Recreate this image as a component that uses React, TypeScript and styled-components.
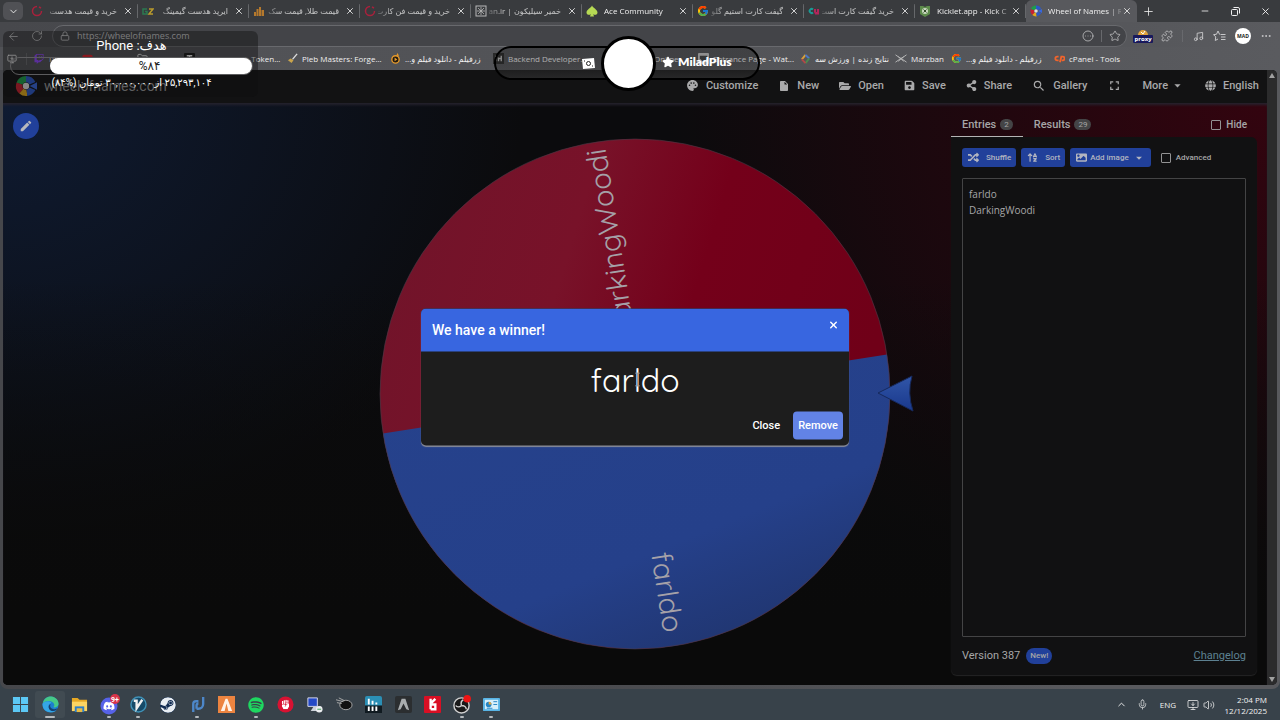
import React from "react";
import styled, { createGlobalStyle, css } from "styled-components";
import { FaFolderOpen, FaRandom, FaShareAlt, FaGlobe, FaSave, FaSpotify, FaSteam, FaDiscord, FaTwitch, FaYoutube, FaStar, FaFistRaised, FaImage } from "react-icons/fa";
import { FaArrowUpAZ } from "react-icons/fa6";
import { MdPalette, MdInsertDriveFile, MdSearch, MdFullscreen, MdArrowDropDown, MdEdit } from "react-icons/md";
import { FcGoogle } from "react-icons/fc";
import {
  ArrowLeft, RotateCw, Lock, Star, CircleEllipsis, Puzzle, Ellipsis, ChevronDown, ChevronUp, X, Plus, Minus,
  Mic, Volume2, MonitorDown, Music, Folder,
} from "lucide-react";

const ui = `"Open Sans", "DejaVu Sans", sans-serif`;
const web = `Roboto, "DejaVu Sans", sans-serif`;
const rounded = `Quicksand, Lato, sans-serif`;

const GlobalStyle = createGlobalStyle`
  *, *::before, *::after { box-sizing: border-box; }
  body { margin: 0; background: #0a0a0a; font-family: ${web}; }
  button, input, textarea { font: inherit; color: inherit; }
  button { border: 0; padding: 0; background: none; }
  svg { display: block; flex: none; }
`;

const Desktop = styled.div`
  position: relative;
  display: flex;
  flex-direction: column;
  min-height: 100vh;
  overflow: hidden;
  background: #38424a;
`;

const Browser = styled.div`
  display: flex;
  flex-direction: column;
  flex: 1;
  border-radius: 0 0 8px 8px;
  background: linear-gradient(90deg, #46474b, #4b4c50 50%, #58595d 85%);
`;

/* Tab strip */

const TabStrip = styled.div`
  display: flex;
  align-items: center;
  height: 22px;
  padding-left: 3px;
  background: #393b3e;
  color: #f0f0f0;
  font: 8px/16px ${ui};
`;

const TabMenu = styled.button`
  display: grid;
  place-items: center;
  width: 20px;
  height: 18px;
  margin-right: 4px;
  border-radius: 5px;
  background: #505155;
`;

const IconButton = styled.button`
  display: grid;
  place-items: center;
  min-width: 12px;
  height: 16px;
`;

const Tab = styled.div<{ $active?: boolean }>`
  display: flex;
  align-items: center;
  flex: 0 1 111px;
  min-width: 0;
  height: 22px;
  padding: 0 4px;
  border-radius: 6px 6px 0 0;
  ${(p) =>
    p.$active
      ? css`background: #58595d;`
      : css`background: linear-gradient(#66686b, #66686b) right center / 1px 14px no-repeat;`}
`;

const TabLabel = styled.button<{ $rtl?: boolean }>`
  flex: 1;
  min-width: 0;
  margin: 0 ${(p) => (p.$rtl ? "5px 0 2px" : "0 0 6px")};
  overflow: hidden;
  white-space: nowrap;
  direction: ${(p) => (p.$rtl ? "rtl" : "ltr")};
  text-align: ${(p) => (p.$rtl ? "right" : "left")};
  opacity: ${(p) => (p.$rtl ? 0.75 : 1)};
  mask-image: linear-gradient(${(p) => (p.$rtl ? "270deg" : "90deg")}, #000 80%, rgba(0, 0, 0, 0.3));
`;

const NewTab = styled(IconButton)`
  margin-left: 5px;
`;

const WindowButtons = styled.div`
  display: flex;
  flex: 1;
  justify-content: flex-end;
  gap: 18px;
  padding-right: 9px;
`;

/* Address row */

const AddressRow = styled.div`
  display: flex;
  align-items: center;
  height: 25px;
  padding: 3px 8px 0 7px;
  gap: 9px;
  color: #c8c8ca;
  background: linear-gradient(90deg, #47484c, #505155 70%, #5a5b5f);
`;

const NavButtons = styled.div`
  display: flex;
  gap: 11px;
`;

const AddressBar = styled.label`
  display: flex;
  align-items: center;
  flex: 1;
  height: 22px;
  padding: 0 5px 0 7px;
  margin-right: -2px;
  gap: 7px;
  border: 1px solid #68696d;
  border-radius: 11px;
  background: #434448;
`;

const AddressInput = styled.input`
  flex: 1;
  min-width: 0;
  padding: 0;
  border: 0;
  outline: 0;
  background: none;
  font: 9px/16px ${ui};
`;

const Divider = styled.span`
  width: 1px;
  height: 12px;
  background: #68696d;
`;

const Proxy = styled.button`
  display: flex;
  flex-direction: column;
  align-items: center;
  width: 18px;
  color: #fff;
  font: bold 6px/8px ${ui};
  span { padding: 0 1px; border-radius: 1px; background: #19195c; }
`;

const Avatar = styled.button`
  width: 16px;
  height: 16px;
  border-radius: 50%;
  background: #fff;
  color: #222;
  font: bold 5px/16px ${ui};
`;

/* Bookmarks */

const Bookmarks = styled.nav`
  display: flex;
  align-items: center;
  height: 23px;
  padding-left: 7px;
  color: #f0f0f0;
  font: 8px/16px ${ui};
  background: linear-gradient(90deg, #505155, #545559 70%, #5a5b5f);
`;

const SideTabs = styled.span`
  display: flex;
  justify-content: space-between;
  align-items: center;
  width: 20px;
  margin-right: 7px;
`;

const Bookmark = styled.a<{ $width: number }>`
  display: flex;
  align-items: center;
  gap: 4px;
  flex: 0 1 ${(p) => p.$width}px;
  min-width: 0;
  padding-right: 8px;
  color: inherit;
  text-decoration: none;
  white-space: nowrap;
`;

/* Web page */

const Viewport = styled.div`
  position: relative;
  display: flex;
  flex: 1;
  margin: 0 3px 4px;
  border-radius: 5px;
  overflow: hidden;
  background: #0a0b0c;
`;

const Page = styled.div`
  display: flex;
  flex-direction: column;
  flex: 1;
  min-width: 0;
`;

const Scrollbar = styled.div`
  display: flex;
  flex-direction: column;
  justify-content: space-between;
  align-items: center;
  width: 10px;
  padding: 3px 0;
  background: #2b2b2c;
  color: #a0a0a0;
`;

const SiteHeader = styled.header`
  display: flex;
  align-items: center;
  justify-content: space-between;
  height: 33px;
  padding: 0 8px 2px 12px;
  background: #121213;
  color: #a9a9aa;
`;

const Brand = styled.a`
  display: flex;
  align-items: center;
  gap: 7px;
  color: #98989a;
  text-decoration: none;
  font: 14px/20px ${web};
`;

const Menu = styled.nav`
  display: flex;
  gap: 20px;
  font: 500 11px/16px ${web};
`;

const MenuItem = styled.button<{ $tight?: boolean }>`
  display: flex;
  align-items: center;
  gap: ${(p) => (p.$tight ? 2 : 7)}px;
`;

const Stage = styled.main`
  display: grid;
  grid-template-columns: 1fr minmax(0, 560px) 1fr;
  flex: 1;
  align-items: center;
  background:
    linear-gradient(180deg, transparent 30%, #0a0a0a 88%),
    radial-gradient(ellipse 520px 440px at 0 0, #0f1b32, transparent),
    radial-gradient(ellipse 600px 560px at 100% 0, #33040f, transparent),
    #0b0b0d;
  box-shadow: inset 0 3px 3px -1px #26232e;
`;

const EditButton = styled.button`
  display: grid;
  place-items: center;
  align-self: start;
  width: 26px;
  height: 26px;
  margin: 10px;
  border-radius: 50%;
  background: #21409a;
  color: #b8b8bc;
`;

const Side = styled.aside`
  display: flex;
  flex-direction: column;
  align-self: stretch;
  justify-self: end;
  width: 306px;
  margin: 10px 10px 10px 0;
  color: #a6a6a7;
`;

const PanelTabs = styled.div`
  display: flex;
  align-items: stretch;
  height: 24px;
  font: 500 11px/16px ${web};
`;

const PanelTab = styled.button<{ $active?: boolean }>`
  display: flex;
  align-items: center;
  gap: 4px;
  padding: 0 10px 0 11px;
  border-bottom: 1px solid ${(p) => (p.$active ? "#b4b4b4" : "transparent")};
`;

const Count = styled.span`
  padding: 0 4px;
  border-radius: 6px;
  background: #444446;
  font: 8px/11px ${web};
`;

const Check = styled.label`
  display: flex;
  align-items: center;
  gap: 5px;
  font: 500 8px/16px ${web};
  input {
    appearance: none;
    width: 10px;
    height: 10px;
    margin: 0;
    border: 1px solid #929293;
    border-radius: 1px;
  }
`;

const HideCheck = styled(Check)`
  margin: 0 10px 0 auto;
  font-size: 10px;
`;

const Card = styled.section`
  display: flex;
  flex-direction: column;
  flex: 1;
  padding: 11px 11px 10px;
  border-radius: 0 6px 6px 6px;
  background: #111112;
  box-shadow: 0 1px 1px #242425;
`;

const Tools = styled.div`
  display: flex;
  align-items: center;
  gap: 5px;
  margin-bottom: 11px;
  ${Check} { margin-left: 5px; }
`;

const ToolButton = styled.button<{ $tight?: boolean }>`
  display: flex;
  align-items: center;
  gap: ${(p) => (p.$tight ? 3 : 7)}px;
  height: 19px;
  padding: 0 5px 0 6px;
  border-radius: 3px;
  background: #21409a;
  color: #b3b5c0;
  font: 500 8px/16px ${web};
`;

const Names = styled.textarea`
  flex: 1;
  width: 100%;
  padding: 7px 6px;
  border: 1px solid #444445;
  border-radius: 1px;
  outline: 0;
  resize: none;
  background: none;
  font: 10px/16px ${ui};
`;

const CardFooter = styled.footer`
  display: flex;
  align-items: center;
  gap: 6px;
  margin-top: 10px;
  font: 11px/18px ${web};
  a { margin-left: auto; color: #5d8191; }
`;

const NewBadge = styled.span`
  padding: 0 4px;
  border-radius: 8px;
  background: #21409a;
  font: 500 8px/16px ${web};
`;

const WheelArt = styled.svg`
  width: 100%;
  overflow: visible;
  font-family: ${rounded};
`;

/* Winner dialog */

const Dialog = styled.div`
  position: absolute;
  top: calc(50% - 1px);
  left: calc(50% - 5px);
  transform: translate(-50%, -50%);
  width: 428px;
  border-radius: 5px;
  overflow: hidden;
  background: #1d1d1d;
  color: #fff;
  box-shadow: 0 1px 1px #8a8d98;
`;

const DialogHead = styled.div`
  display: flex;
  justify-content: space-between;
  height: 43px;
  padding: 0 10px 0 11px;
  background: #3866e0;
  font: 500 14px/43px ${web};
  button { height: 34px; }
`;

const Winner = styled.div`
  position: relative;
  padding-top: 8px;
  text-align: center;
  font: 400 32px/40px ${rounded};
`;

const TextCursor = styled.svg`
  position: absolute;
  top: 21px;
  left: 50%;
`;

const DialogActions = styled.div`
  display: flex;
  justify-content: flex-end;
  gap: 8px;
  padding: 12px 6px 6px;
`;

const Action = styled.button<{ $primary?: boolean }>`
  height: 28px;
  padding: 0 5px;
  border-radius: 4px;
  background: ${(p) => (p.$primary ? "#6283e6" : "none")};
  font: 500 11px/28px ${web};
`;

/* Stream overlays */

const Goal = styled.div`
  position: absolute;
  top: 31px;
  left: 3px;
  width: 255px;
  height: 66px;
  padding: 5px 5px 0 7px;
  border-radius: 6px;
  background: rgba(14, 14, 15, 0.42);
  color: #fff;
  direction: rtl;
  text-align: center;
  font: 13px/20px ${web};
`;

const Track = styled.div`
  position: relative;
  height: 18px;
  margin-top: 1px;
  border: 1px solid #5c5c5e;
  border-radius: 9px;
  color: #222;
  font: 12px/16px ${web};
  span { position: relative; margin-left: 36px; }
`;

const Fill = styled.div`
  position: absolute;
  inset: 0 0 0 auto;
  border-radius: 8px;
  background: #fff;
`;

const GoalNote = styled.div`
  font: 10px/16px ${web};
`;

const Alert = styled.div`
  position: absolute;
  top: 46px;
  left: calc(50% - 146px);
  display: flex;
  align-items: center;
  width: 266px;
  height: 34px;
  padding: 0 24px 0 86px;
  border: 2px solid #000;
  border-radius: 17px;
  background: linear-gradient(180deg, rgba(20, 20, 20, 0.3) 40%, rgba(60, 60, 60, 0.5));
  color: #fff;
  font: 800 12px/20px Lato, sans-serif;
`;

const Disc = styled.span`
  flex: none;
  width: 55px;
  height: 55px;
  margin: 0 6px;
  border: 3px solid #000;
  border-radius: 50%;
  background: #fff;
`;

const AlertName = styled.span`
  display: flex;
  align-items: center;
  gap: 4px;
  padding-bottom: 3px;
`;

/* Taskbar */

const Taskbar = styled.footer`
  display: flex;
  align-items: center;
  justify-content: space-between;
  height: 31px;
  padding: 0 13px 0 6px;
  color: #f2f2f2;
`;

const Apps = styled.div`
  display: grid;
  grid-template-columns: repeat(17, 1fr);
  width: 500px;
`;

const TaskButton = styled.button<{ $state?: "open" | "focus" }>`
  display: grid;
  place-items: center;
  height: 27px;
  border-radius: 3px;
  position: relative;
  ${(p) => p.$state === "focus" && css`background: #414b52;`}
  ${(p) =>
    p.$state &&
    css`
      &::after {
        content: "";
        position: absolute;
        bottom: 0;
        width: ${p.$state === "focus" ? 10 : 4}px;
        height: 2px;
        border-radius: 1px;
        background: #b4b9bd;
      }
    `}
`;

const Tray = styled.div`
  display: flex;
  align-items: center;
  font: 8px/11px ${ui};
`;

const TrayItem = styled.button<{ $width: number }>`
  display: grid;
  place-items: center;
  width: ${(p) => p.$width}px;
`;

const Clock = styled.time`
  width: 51px;
  text-align: right;
`;

const MiniWheel = ({ size }: { size: number }) => (
  <svg width={size} height={size} viewBox="0 0 24 24" fill="none" aria-hidden="true">
    <g strokeWidth="7">
      <path d="M12 4.500A7.500 7.500 0 0 1 19 9" stroke="#2c58c8" />
      <path d="M5 9.500A7.500 7.500 0 0 1 12 4.500" stroke="#1c9e4b" />
      <path d="M7 17.600A7.500 7.500 0 0 1 5 9.500" stroke="#c9202f" />
      <path d="M13 19.400A7.500 7.500 0 0 1 7 17.600" stroke="#e0a91c" />
      <path d="M19 15A7.500 7.500 0 0 1 13 19.400" stroke="#2c58c8" />
    </g>
    <circle cx="12" cy="12" r="3.500" fill="#ddd" />
    <path d="M24 8v8l-8-4z" fill="#3767dd" />
  </svg>
);

const SwirlIcon = () => (
  <svg width="12" height="12" viewBox="0 0 12 12" fill="none" stroke="#a8213c" strokeWidth="1.5" aria-hidden="true">
    <path d="M6 1.500A4.500 4.500 0 1 0 10.500 6" />
    <path d="M8 2l2 1" />
  </svg>
);

const GzIcon = () => (
  <svg width="12" height="12" viewBox="0 0 12 12" fill="none" strokeWidth="1.500" aria-hidden="true">
    <path d="M5 4H1v5h4V6.500H3" stroke="#2b7a50" />
    <path d="M7 4h4L7 9h4" stroke="#b99b2c" />
  </svg>
);

const BarsIcon = () => (
  <svg width="12" height="12" viewBox="0 0 12 12" fill="#b5792d" aria-hidden="true">
    <path d="M1 7h2v4H1zM3.500 4h2v7h-2zM6 2h2v9H6zM8.500 5h2.500v6H8.500z" />
  </svg>
);

const ChipIcon = () => (
  <svg width="12" height="12" viewBox="0 0 12 12" fill="none" stroke="#b8b8b8" aria-hidden="true">
    <rect x="1" y="1" width="10" height="10" />
    <path d="M3 3l6 6M9 3L3 9M6 2v8M2 6h8" strokeWidth=".8" />
  </svg>
);

const SpadeIcon = () => (
  <svg width="12" height="12" viewBox="0 0 12 12" fill="#b6d954" aria-hidden="true">
    <path d="M6 .5C7 3 11.500 4.500 11.500 7.500c0 2.500-3 3-4.300 1.500L8 11.500H4L4.800 9C3.500 10.500.5 10 .5 7.500.5 4.500 5 3 6 .5z" />
  </svg>
);

const DuoIcon = () => (
  <svg width="12" height="12" viewBox="0 0 12 12" fill="none" strokeWidth="2" aria-hidden="true">
    <path d="M5 4.500a2 2 0 1 0 0 3" stroke="#1a9a94" />
    <path d="M7 4v2.500a1.500 1.500 0 0 0 3 0V4M7 8.500h4" stroke="#b3265b" />
  </svg>
);

const KickletIcon = () => (
  <svg width="12" height="12" viewBox="0 0 12 12" aria-hidden="true">
    <path d="M1 1h3l2 1 2-1h3v8l-5 3-5-3z" fill="#5d8b4b" />
    <circle cx="6" cy="6" r="3" fill="#c9d8bf" />
    <path d="M4.500 4.500l3 3M7.500 4.500l-3 3" stroke="#32492a" />
  </svg>
);

const BrushIcon = () => (
  <svg width="11" height="11" viewBox="0 0 12 12" aria-hidden="true">
    <path d="M11 1L6 7" stroke="#ddd" strokeWidth="1.500" />
    <path d="M1 8l3-2 3 2-2 3z" fill="#c9a44c" />
  </svg>
);

const PlayIcon = () => (
  <svg width="11" height="11" viewBox="0 0 12 12" aria-hidden="true">
    <circle cx="6" cy="7" r="4" fill="#201a12" stroke="#e69a2b" strokeWidth="1.500" />
    <path d="M5 5l3 2-3 2zM8 0l2 3H7z" fill="#e69a2b" />
  </svg>
);

const LetterTile = () => (
  <svg width="11" height="11" viewBox="0 0 12 12" aria-hidden="true">
    <rect width="12" height="12" rx="1" fill="#1b1b1b" />
    <path d="M3 3h6M6 3v6M4.500 9h3" stroke="#eee" strokeWidth="1.500" />
  </svg>
);

const BlockIcon = () => (
  <svg width="11" height="11" viewBox="0 0 12 12" aria-hidden="true">
    <rect width="12" height="12" fill="#2a2a2a" />
    <path d="M3 3v6M6 5v4M9 3v6M6 6h3" stroke="#bbb" strokeWidth="1.500" />
  </svg>
);

const SportIcon = () => (
  <svg width="11" height="11" viewBox="0 0 12 12" fill="none" strokeWidth="2" aria-hidden="true">
    <path d="M2 7l4-5" stroke="#d9a13a" />
    <path d="M6 2l4 4" stroke="#4a78c9" />
    <path d="M10 6l-4 5" stroke="#4b8c4e" />
    <path d="M6 11L2 7" stroke="#b34848" />
  </svg>
);

const MarzbanIcon = () => (
  <svg width="12" height="11" viewBox="0 0 12 12" fill="none" stroke="#bbb" aria-hidden="true">
    <path d="M0 2l5 3.500h2L12 2M0 10l5-3.500M12 10L7 6.500M3 4l6 5M9 4L3 9" />
  </svg>
);

const BoxedIcon = () => (
  <svg width="11" height="11" viewBox="0 0 12 12" aria-hidden="true">
    <rect width="12" height="12" rx="1" fill="#c4c4c4" />
    <path d="M2 3h8v3L6 10 2 6z" fill="#444" />
  </svg>
);

const CpanelIcon = () => (
  <svg width="11" height="11" viewBox="0 0 12 12" fill="none" stroke="#f0642c" strokeWidth="2" aria-hidden="true">
    <path d="M5 4H3.500a2 2 0 0 0 0 4H5M6.500 10l1.500-6h1.500a1.800 1.800 0 0 1 0 4H8.500" />
  </svg>
);

const FavoritesIcon = () => (
  <svg width="13" height="12" viewBox="0 0 26 24" fill="none" stroke="currentColor" strokeWidth="2" aria-hidden="true">
    <path d="M15 9l-2-.5L10 2 7 8.500l-6 .8 4.500 4.500L4.500 21l5.500-3M16 9h9M16 14h9M16 19h9" />
  </svg>
);

const RestoreIcon = () => (
  <svg width="9" height="9" viewBox="0 0 9 9" fill="none" stroke="currentColor" aria-hidden="true">
    <rect x=".5" y="2.500" width="6" height="6" rx="1" />
    <path d="M2.500 .5H7a1.500 1.500 0 0 1 1.500 1.500v4.500" />
  </svg>
);

const Triangle = ({ down }: { down?: boolean }) => (
  <svg width="6" height="5" viewBox="0 0 6 5" fill="currentColor" aria-hidden="true">
    <path d={down ? "M0 0h6L3 5z" : "M0 5h6L3 0z"} />
  </svg>
);

const tabs = [
  { icon: <SwirlIcon />, text: "خرید و قیمت هدست", rtl: true },
  { icon: <GzIcon />, text: "ایرپد هدست گیمینگ", rtl: true },
  { icon: <BarsIcon />, text: "قیمت طلا, قیمت سک", rtl: true },
  { icon: <SwirlIcon />, text: "خرید و قیمت فن کارت", rtl: true },
  { icon: <ChipIcon />, text: "خمیر سیلیکون | ran.ir", rtl: true },
  { icon: <SpadeIcon />, text: "Ace Community" },
  { icon: <FcGoogle size={12} />, text: "گیفت کارت استیم گلو", rtl: true },
  { icon: <DuoIcon />, text: "خرید گیفت کارت است", rtl: true },
  { icon: <KickletIcon />, text: "Kicklet.app - Kick C" },
  { icon: <MiniWheel size={12} />, text: "Wheel of Names | R", active: true },
];

const bookmarks = [
  { width: 48, icon: <FaTwitch size={10} color="#9146ff" />, text: "Twitch" },
  { width: 55, icon: <FaYoutube size={11} color="#e0202a" />, text: "YouTube" },
  { width: 47, icon: <Folder size={11} />, text: "Media" },
  { width: 103, icon: <LetterTile />, text: "Twitch OAuth Token..." },
  { width: 103, icon: <BrushIcon />, text: "Pleb Masters: Forge..." },
  { width: 103, icon: <PlayIcon />, text: "زرفیلم - دانلود فیلم و...", rtl: true },
  { width: 161, icon: <BlockIcon />, text: "Backend Developer..." },
  { width: 44, icon: null, text: "Online" },
  { width: 102, icon: <BoxedIcon />, text: "Entrance Page - Wat..." },
  { width: 95, icon: <SportIcon />, text: "نتایج زنده | ورزش سه", rtl: true },
  { width: 56, icon: <MarzbanIcon />, text: "Marzban" },
  { width: 103, icon: <FcGoogle size={11} />, text: "زرفیلم - دانلود فیلم و...", rtl: true },
  { width: 80, icon: <CpanelIcon />, text: "cPanel - Tools" },
];

const menu = [
  { icon: <MdPalette size={13} />, text: "Customize" },
  { icon: <MdInsertDriveFile size={12} />, text: "New" },
  { icon: <FaFolderOpen size={12} />, text: "Open" },
  { icon: <FaSave size={11} />, text: "Save" },
  { icon: <FaShareAlt size={11} />, text: "Share" },
  { icon: <MdSearch size={14} />, text: "Gallery" },
];

type AppEntry = { name: string; state?: "open" | "focus"; icon: React.ReactNode };

const art = (children: React.ReactNode) => (
  <svg width="17" height="17" viewBox="0 0 18 18" aria-hidden="true">{children}</svg>
);

const SteamBadge = styled(FaSteam)`
  border-radius: 50%;
  background: #102b52;
`;

const apps: AppEntry[] = [
  { name: "Start", icon: art(<><path d="M1 1h7.500v7.500H1zM9.500 1H17v7.500H9.500zM1 9.500h7.500V17H1zM9.500 9.500H17V17H9.500z" fill="#5cc8f5" /></>) },
  {
    name: "Edge", state: "focus", icon: art(<>
      <circle cx="9" cy="9" r="8.500" fill="#1c7ed0" />
      <path d="M.7 8C2 2 7-.5 11.500.9c4 1.200 6.200 4.500 6 7.600-.3 3-3 4-5.500 3.500 1-1 1.500-2 .5-4C11 5 5 4 .7 8z" fill="#46c887" />
      <path d="M.7 8C4 4.500 9 5 10 7.500 7 8 6 11 8 14c2 2.500 5 2.800 7.500 1C11 19 4 17.500 1.500 13A8.500 8.500 0 0 1 .7 8z" fill="#35a7e6" />
      <path d="M9.500 8.500c-1.500 1-1.500 5 3 5.500 2 .1 3-.5 4.200-1.200-1.500 3-5 4-7.500 2.500-3-2-2.800-6 .3-6.800z" fill="#16406f" />
    </>),
  },
  { name: "Explorer", icon: art(<><path d="M1 2h6l2 2h8v12H1z" fill="#e6a824" /><path d="M1 6h16v10H1z" fill="#fcd462" /><path d="M4 11h10v6H4z" fill="#2c7fc9" /><path d="M6 13h6v4H6z" fill="#e9bb43" /></>) },
  { name: "Discord", state: "open", icon: <svg width="22" height="22" viewBox="0 0 22 22" aria-hidden="true"><circle cx="11" cy="12" r="8.500" fill="#5662e8" /><g transform="translate(5 6)"><FaDiscord size={12} color="#fff" /></g><circle cx="17" cy="5" r="5" fill="#d9344a" /><text x="17" y="7.500" textAnchor="middle" fontSize="7" fontWeight="700" fontFamily="Roboto" fill="#fff">9+</text></svg> },
  { name: "V2ray", state: "open", icon: art(<><circle cx="9" cy="9" r="8" fill="#164a68" stroke="#3f90b5" strokeWidth="1.500" /><path d="M4 5h3v8L13 4" fill="none" stroke="#f0f0f0" strokeWidth="2.500" /></>) },
  { name: "Steam", icon: <SteamBadge size={16} color="#e8edf2" /> },
  { name: "Player", state: "open", icon: art(<><path d="M4.500 17V8.500A3 3 0 0 1 7.500 5.500H10M8 13.500h2a5 5 0 0 0 5-5V1M8 13.500V10a2 2 0 0 1 2-2" fill="none" stroke="#4d87c9" strokeWidth="2.500" /></>) },
  { name: "FiveM", icon: art(<><path d="M0 0h18v18H0z" fill="#ec8440" /><path d="M3 16l5-13h2l5 13h-4L9 8l-2 8z" fill="#fff2e6" /></>) },
  { name: "Spotify", state: "open", icon: <FaSpotify size={16} color="#1ed760" /> },
  { name: "Rockstar", icon: art(<><circle cx="9" cy="9" r="8.500" fill="#d81232" /><g transform="translate(4 4)"><FaFistRaised size={10} color="#fff" /></g></>) },
  { name: "Remote", icon: art(<><path d="M2 2h10v9H2z" fill="#2449c6" stroke="#dde" /><path d="M8 11h8v5H5z" fill="#cdd2da" /><circle cx="14" cy="14" r="3.500" fill="#eceef0" /><path d="M12 14h4" stroke="#3a9b50" /></>) },
  { name: "Comet", icon: art(<><ellipse cx="10.500" cy="9.500" rx="6.500" ry="5" fill="#111" stroke="#aaa" /><path d="M0 4l8 2M1 7l5 1M3 2l6 3" stroke="#aaa" /></>) },
  { name: "Mixer", icon: art(<><rect width="18" height="18" rx="2" fill="#2b8fb5" /><path d="M0 10h18v8H0z" fill="#101a20" /><path d="M4 3v6M8 5v4M12 7v2M4 11v5M8 11v5M12 11v5" stroke="#fff" strokeWidth="2" /></>) },
  { name: "Arena", icon: art(<><rect width="18" height="18" rx="2" fill="#2b2e30" /><path d="M3 15L7 3h4l4 12-3-1-3-6-3 6z" fill="#a9adaf" /></>) },
  { name: "Kick", icon: art(<><rect width="18" height="18" rx="1" fill="#d90f24" /><path d="M7 3v11M7 14h5V9H8M12 3l-4 4" stroke="#fff" strokeWidth="2.500" fill="none" /></>) },
  { name: "OBS", state: "open", icon: <svg width="19" height="19" viewBox="0 0 20 20" aria-hidden="true"><circle cx="10" cy="11" r="8" fill="#191919" stroke="#d0d0d0" strokeWidth="1.500" /><path d="M10 11c-1-3 0-5 2-6M10 11c3 0 5 2 5 4M10 11c-2 2-5 2-6 0" stroke="#d0d0d0" strokeWidth="1.500" fill="none" /><circle cx="16" cy="4" r="4" fill="#ee1414" /></svg> },
  { name: "Control Panel", state: "open", icon: art(<><rect y="2" width="18" height="14" rx="1" fill="#58b4e5" /><rect x="2" y="4" width="14" height="10" fill="#d6f0fb" /><circle cx="6" cy="9" r="3" fill="#2484c4" /><path d="M6 9V6a3 3 0 0 1 3 3z" fill="#e5a33a" /><path d="M11 6h4M11 9h4M4 13h6" stroke="#2484c4" /></>) },
];

const Wheel = () => (
  <WheelArt viewBox="0 0 560 560" role="img" aria-label="Wheel">
    <defs>
      <linearGradient id="red" x1="0" y1="0" x2="1" y2=".3">
        <stop offset="0" stopColor="#70142a" />
        <stop offset=".4" stopColor="#781229" />
        <stop offset=".65" stopColor="#74001a" />
        <stop offset="1" stopColor="#700018" />
      </linearGradient>
      <linearGradient id="blue" x1="0" y1="0" x2=".7" y2="1">
        <stop offset="0" stopColor="#26428c" />
        <stop offset=".7" stopColor="#25408a" />
        <stop offset="1" stopColor="#20356f" />
      </linearGradient>
      <linearGradient id="arrow" x1="0" y1="0" x2="0" y2="1">
        <stop offset="0" stopColor="#3156a8" />
        <stop offset="1" stopColor="#19388c" />
      </linearGradient>
    </defs>
    <circle cx="280" cy="280" r="255" fill="url(#red)" />
    <path d="M28 319.500A254.960 254.960 0 0 0 532 240.500z" fill="url(#blue)" />
    <circle cx="280" cy="280" r="255" fill="none" stroke="#4b3a48" strokeOpacity=".6" />
    <g fill="#a5a1a8" fontSize="29" textAnchor="end">
      <text transform="translate(280 280) rotate(-98.900)" x="248" y="9">DarkingWoodi</text>
      <text transform="translate(280 280) rotate(81.100)" x="241" y="9">farldo</text>
    </g>
    <path d="M523 279l34-17q-5 17 1 35z" fill="url(#arrow)" stroke="#16295c" />
  </WheelArt>
);

export default function App() {
  const progress = 84;
  return (
    <Desktop>
      <GlobalStyle />
      <Browser>
        <TabStrip>
          <TabMenu aria-label="Tab actions"><ChevronDown size={11} /></TabMenu>
          {tabs.map((t) => (
            <Tab key={t.text} $active={t.active}>
              {t.icon}
              <TabLabel $rtl={t.rtl}>{t.text}</TabLabel>
              <IconButton aria-label="Close tab"><X size={10} /></IconButton>
            </Tab>
          ))}
          <NewTab aria-label="New tab"><Plus size={13} strokeWidth={1.5} /></NewTab>
          <WindowButtons>
            <IconButton aria-label="Minimize"><Minus size={10} /></IconButton>
            <IconButton aria-label="Restore"><RestoreIcon /></IconButton>
            <IconButton aria-label="Close"><X size={11} /></IconButton>
          </WindowButtons>
        </TabStrip>
        <AddressRow>
          <NavButtons>
            <IconButton aria-label="Back"><ArrowLeft size={13} strokeWidth={1.5} /></IconButton>
            <IconButton aria-label="Reload"><RotateCw size={12} strokeWidth={1.5} /></IconButton>
          </NavButtons>
          <AddressBar aria-label="Address">
            <Lock size={10} />
            <AddressInput defaultValue="https://wheelofnames.com" />
            <CircleEllipsis size={12} strokeWidth={1.5} />
            <Divider />
            <Star size={12} strokeWidth={1.5} />
          </AddressBar>
          <Proxy>
            <svg width="12" height="6" viewBox="0 0 12 6" aria-hidden="true"><path d="M1 6a5 5 0 0 1 10 0z" fill="#e0a23c" /><path d="M4 3l2 2 2-3" stroke="#fff" fill="none" /></svg>
            <span>proxy</span>
          </Proxy>
          <IconButton aria-label="Extensions"><Puzzle size={12} strokeWidth={1.5} /></IconButton>
          <Divider />
          <IconButton aria-label="Media"><Music size={11} /></IconButton>
          <IconButton aria-label="Favorites"><FavoritesIcon /></IconButton>
          <Avatar>MAD</Avatar>
          <IconButton aria-label="Settings"><Ellipsis size={12} /></IconButton>
        </AddressRow>
        <Bookmarks>
          <SideTabs><MonitorDown size={10} /><Divider /></SideTabs>
          {bookmarks.map((b, i) => (
            <Bookmark key={i} href="#" $width={b.width}>
              {b.icon}
              <span dir={b.rtl ? "rtl" : "ltr"}>{b.text}</span>
            </Bookmark>
          ))}
        </Bookmarks>
        <Viewport>
          <Page>
            <SiteHeader>
              <Brand href="#"><MiniWheel size={22} />wheelofnames.com</Brand>
              <Menu>
                {menu.map((m) => <MenuItem key={m.text}>{m.icon}{m.text}</MenuItem>)}
                <MenuItem aria-label="Fullscreen"><MdFullscreen size={15} /></MenuItem>
                <MenuItem $tight>More<MdArrowDropDown size={15} /></MenuItem>
                <MenuItem><FaGlobe size={11} />English</MenuItem>
              </Menu>
            </SiteHeader>
            <Stage>
              <EditButton aria-label="Edit title"><MdEdit size={14} /></EditButton>
              <Wheel />
              <Side>
                <PanelTabs>
                  <PanelTab $active>Entries<Count>2</Count></PanelTab>
                  <PanelTab>Results<Count>29</Count></PanelTab>
                  <HideCheck><input type="checkbox" />Hide</HideCheck>
                </PanelTabs>
                <Card>
                  <Tools>
                    <ToolButton><FaRandom size={11} />Shuffle</ToolButton>
                    <ToolButton><FaArrowUpAZ size={11} />Sort</ToolButton>
                    <ToolButton $tight><FaImage size={11} />Add image<MdArrowDropDown size={14} /></ToolButton>
                    <Check><input type="checkbox" />Advanced</Check>
                  </Tools>
                  <Names aria-label="Entries" spellCheck={false} defaultValue={"farldo\nDarkingWoodi"} />
                  <CardFooter>Version 387<NewBadge>New!</NewBadge><a href="#">Changelog</a></CardFooter>
                </Card>
              </Side>
            </Stage>
          </Page>
          <Scrollbar><Triangle /><Triangle down /></Scrollbar>
          <Dialog role="dialog" aria-label="We have a winner!">
            <DialogHead>We have a winner!<IconButton aria-label="Dismiss"><X size={11} strokeWidth={3} /></IconButton></DialogHead>
            <Winner>
              farldo
              <TextCursor width="5" height="14" viewBox="0 0 5 14" fill="none" stroke="#999" aria-hidden="true">
                <path d="M0 .5h5M2.500 0v14M0 13.500h5" />
              </TextCursor>
            </Winner>
            <DialogActions><Action>Close</Action><Action $primary>Remove</Action></DialogActions>
          </Dialog>
        </Viewport>
      </Browser>
      <Taskbar>
        <Apps>
          {apps.map((a) => <TaskButton key={a.name} aria-label={a.name} $state={a.state}>{a.icon}</TaskButton>)}
        </Apps>
        <Tray>
          <TrayItem $width={20} aria-label="Hidden icons"><ChevronUp size={11} /></TrayItem>
          <TrayItem $width={22} aria-label="Microphone"><Mic size={11} strokeWidth={1.5} /></TrayItem>
          <TrayItem $width={30}>ENG</TrayItem>
          <TrayItem $width={19} aria-label="Network"><MonitorDown size={12} strokeWidth={1.5} /></TrayItem>
          <TrayItem $width={14} aria-label="Volume"><Volume2 size={12} strokeWidth={1.5} /></TrayItem>
          <Clock>2:04 PM<br />12/12/2025</Clock>
        </Tray>
      </Taskbar>
      <Goal>
        هدف: Phone
        <Track role="progressbar" aria-valuenow={progress} aria-label="Goal">
          <Fill style={{ width: `${progress}%` }} />
          <span>%۸۴</span>
        </Track>
        <GoalNote>۲۵,۲۹۳,۱۰۴ از ۳۰,۰۰۰,۰۰۰ تومان (%۸۴)</GoalNote>
      </Goal>
      <Alert>
        <svg width="13" height="11" viewBox="0 0 13 11" aria-hidden="true"><path d="M0 1l12-1 1 10-12 1z" fill="#fff" /><circle cx="6.500" cy="5.500" r="2" fill="none" stroke="#222" /><path d="M2 3h1M10 8h1" stroke="#222" /></svg>
        <Disc />
        <AlertName><FaStar size={12} />MiladPlus</AlertName>
      </Alert>
    </Desktop>
  );
}
